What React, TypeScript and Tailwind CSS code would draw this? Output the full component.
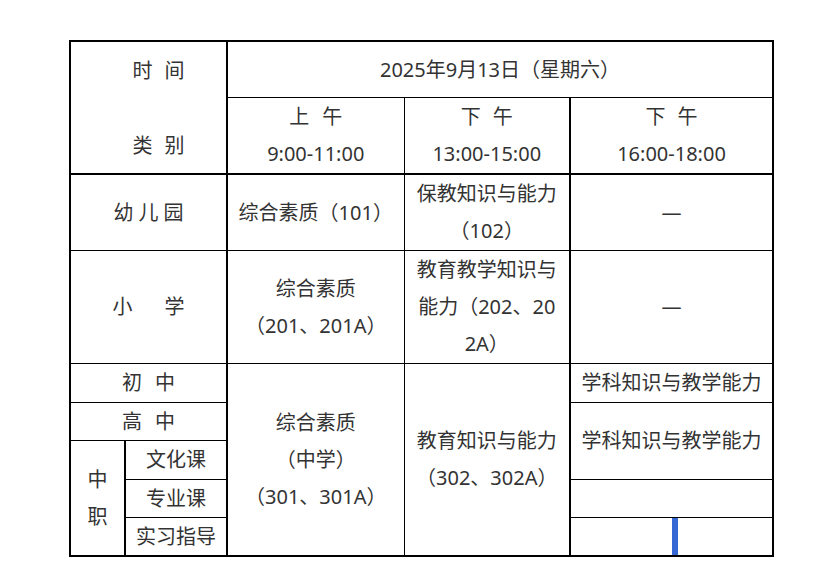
import type { ReactNode } from 'react';

// 考试时间安排表 — spaced labels are laid out char by char so the gaps match the sheet.
function Spaced({ text, gap }: { text: string; gap: string }) {
  return (
    <div className={`flex justify-center ${gap}`}>
      {text.split('').map((c, i) => (
        <span key={i}>{c}</span>
      ))}
    </div>
  );
}

function Lines({ lines }: { lines: ReactNode[] }) {
  return (
    <div className="flex flex-col items-center">
      {lines.map((l, i) => (
        <div key={i} className="whitespace-nowrap">
          {l}
        </div>
      ))}
    </div>
  );
}

const cell = 'border border-black p-0 text-center align-middle';

export default function App() {
  return (
    <div className="min-h-screen bg-white pl-[69px] pt-[40px] font-['Noto_Sans','Noto_Sans_CJK_SC',sans-serif] text-[20px] leading-[37px] text-[#333]">
      <table className="w-[705px] table-fixed border-collapse border-2 border-black">
        <colgroup>
          <col className="w-[55px]" />
          <col className="w-[102px]" />
          <col className="w-[177px]" />
          <col className="w-[166px]" />
          <col className="w-[203px]" />
        </colgroup>
        <tbody>
          <tr className="h-[56px]">
            <td rowSpan={2} colSpan={2} className={`${cell} border-r-2 border-b-2`}>
              <div className="flex h-[129px] flex-col justify-between py-[8.5px] pl-[20px]">
                <Spaced text="时间" gap="gap-[12px]" />
                <Spaced text="类别" gap="gap-[12px]" />
              </div>
            </td>
            <td colSpan={3} className={cell}>
              2025年9月13日（星期六）
            </td>
          </tr>
          <tr className="h-[77px]">
            <td className={`${cell} border-b-2`}>
              <Spaced text="上午" gap="gap-[13px]" />
              <div>9:00-11:00</div>
            </td>
            <td className={`${cell} border-b-2`}>
              <Spaced text="下午" gap="gap-[12px]" />
              <div>13:00-15:00</div>
            </td>
            <td className={`${cell} border-b-2 border-l-2`}>
              <Spaced text="下午" gap="gap-[12px]" />
              <div>16:00-18:00</div>
            </td>
          </tr>
          <tr className="h-[76px]">
            <td colSpan={2} className={`${cell} border-r-2`}>
              <Spaced text="幼儿园" gap="gap-[5px]" />
            </td>
            <td className={cell}>综合素质（101）</td>
            <td className={`${cell} border-r-2`}>
              <Lines lines={['保教知识与能力', '（102）']} />
            </td>
            <td className={cell}>—</td>
          </tr>
          <tr className="h-[113px]">
            <td colSpan={2} className={`${cell} border-r-2`}>
              <Spaced text="小学" gap="gap-[32px]" />
            </td>
            <td className={cell}>
              <Lines lines={['综合素质', '（201、201A）']} />
            </td>
            <td className={`${cell} border-r-2`}>
              <Lines lines={['教育教学知识与', '能力（202、20', '2A）']} />
            </td>
            <td className={cell}>—</td>
          </tr>
          <tr className="h-[39px]">
            <td colSpan={2} className={`${cell} border-r-2`}>
              <Spaced text="初中" gap="gap-[13px]" />
            </td>
            <td rowSpan={5} className={cell}>
              <Lines lines={['综合素质', '（中学）', '（301、301A）']} />
            </td>
            <td rowSpan={5} className={`${cell} border-r-2`}>
              <Lines lines={['教育知识与能力', '（302、302A）']} />
            </td>
            <td className={cell}>学科知识与教学能力</td>
          </tr>
          <tr className="h-[38px]">
            <td colSpan={2} className={`${cell} border-r-2`}>
              <Spaced text="高中" gap="gap-[13px]" />
            </td>
            <td rowSpan={2} className={cell}>
              学科知识与教学能力
            </td>
          </tr>
          <tr className="h-[39px]">
            <td rowSpan={3} className={`${cell} border-r-2`}>
              <Lines lines={['中', '职']} />
            </td>
            <td className={`${cell} border-r-2`}>文化课</td>
          </tr>
          <tr className="h-[38px]">
            <td className={`${cell} border-r-2`}>专业课</td>
            <td className={cell} />
          </tr>
          <tr className="h-[39px]">
            <td className={`${cell} border-r-2`}>实习指导</td>
            <td className={cell}>
              <div className="flex justify-center">
                <div className="ml-[7px] h-[37px] w-[6px] bg-[#3568d4]" />
              </div>
            </td>
          </tr>
        </tbody>
      </table>
    </div>
  );
}
